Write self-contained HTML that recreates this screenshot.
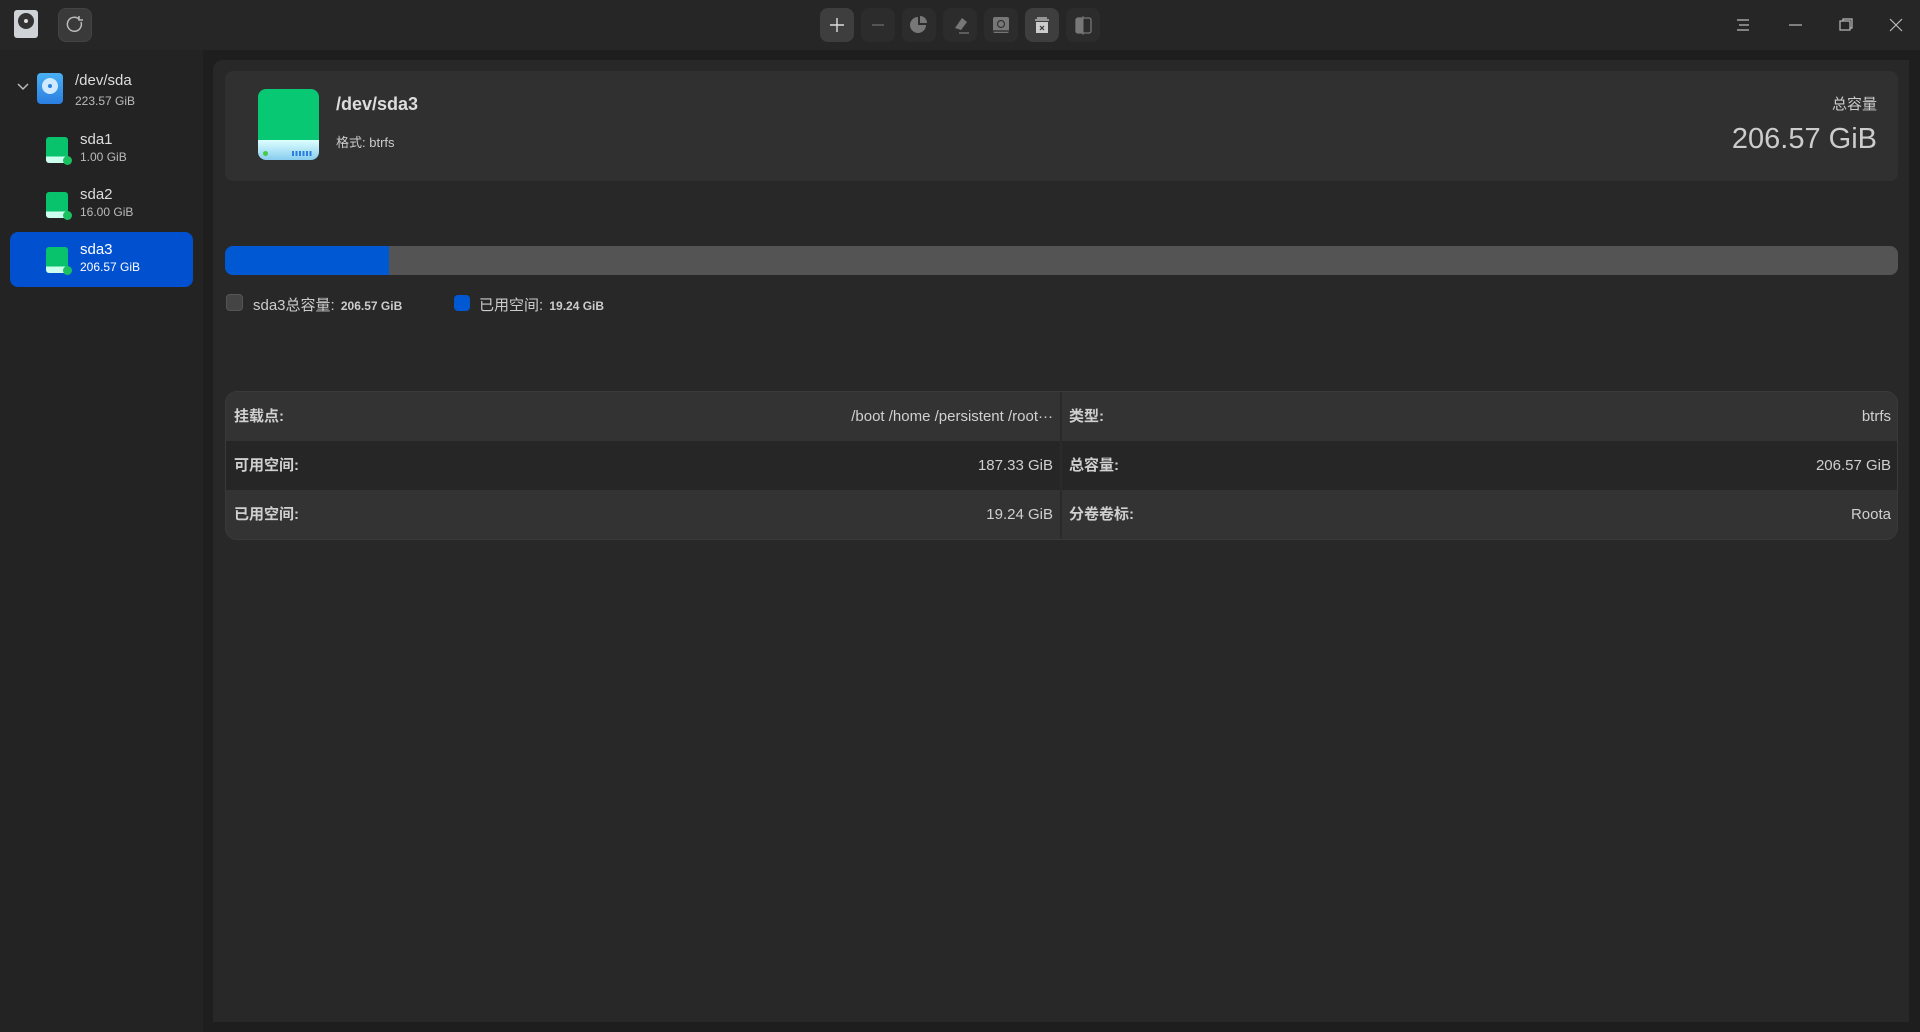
<!DOCTYPE html>
<html><head><meta charset="utf-8"><style>
*{margin:0;padding:0;box-sizing:border-box}
body{width:1920px;height:1032px;background:#1e1e1e;font-family:"Liberation Sans","Noto Sans CJK SC",sans-serif;color:#d0d0d0;position:relative;overflow:hidden}
.a{position:absolute}
.tb{left:0;top:0;width:1920px;height:50px;background:#262626}
.side{left:0;top:50px;width:203px;height:982px;background:#232323}
.main{left:213px;top:60px;width:1696px;height:962px;background:#282828;border-radius:10px 0 0 0}
.btn{width:34px;height:34px;border-radius:8px;background:#2c2c2c;top:8px}
.card{left:225px;top:71px;width:1673px;height:110px;background:#303030;border-radius:8px}
.disk{width:22px;height:26px}
.row{position:absolute;left:0;width:1673px;height:49px;font-size:15px}
.row span{position:absolute;top:0;line-height:49px;height:49px}
</style></head><body>
<div class="a tb"></div>
<div class="a side"></div>
<div class="a main"></div>
<div class="a" style="left:14px;top:10px;width:24px;height:28px;background:#cfd3d8;border-radius:3px"><div class="a" style="left:4px;top:3px;width:16px;height:16px;border-radius:50%;background:#333"></div><div class="a" style="left:10px;top:9px;width:4px;height:4px;border-radius:50%;background:#ddd"></div></div>
<div class="a" style="left:58px;top:8px;width:34px;height:34px;border-radius:8px;background:#3a3a3a;border:1px solid #444"><svg width="32" height="32" viewBox="0 0 32 32"><path d="M22 13a7 7 0 1 1-2-3" fill="none" stroke="#bbb" stroke-width="1.5"/><path d="M20 7v4h4" fill="none" stroke="#bbb" stroke-width="1.5"/></svg></div>
<div class="a btn" style="left:820px;background:#3e3e3e"><svg width="34" height="34"><path d="M17 10v14M10 17h14" stroke="#ddd" stroke-width="1.4"/></svg></div>
<div class="a btn" style="left:861px"><svg width="34" height="34"><path d="M11 17h12" stroke="#666" stroke-width="1.4"/></svg></div>
<div class="a btn" style="left:902px"><svg width="34" height="34"><path d="M16 9a8 8 0 1 0 8 8h-8z" fill="#777"/><path d="M18 8v7h7a7 7 0 0 0-7-7z" fill="#777"/></svg></div>
<div class="a btn" style="left:943px"><svg width="34" height="34"><path d="M12 20l7-10 5 4-6 8z" fill="#777"/><path d="M16 25h10" stroke="#777" stroke-width="1.3"/></svg></div>
<div class="a btn" style="left:984px"><svg width="34" height="34"><rect x="9" y="9" width="16" height="16" rx="2" fill="#777"/><path d="M9 23h16" stroke="#333" stroke-width="1.5"/><circle cx="17" cy="16" r="3.5" fill="none" stroke="#333" stroke-width="1.2"/></svg></div>
<div class="a btn" style="left:1025px;background:#3e3e3e"><svg width="34" height="34"><path d="M12 10h10M10 12h14" stroke="#ccc" stroke-width="1.3"/><rect x="11" y="14" width="12" height="11" fill="#ccc"/><path d="M15 18l4 4M19 18l-4 4" stroke="#333" stroke-width="1.2"/></svg></div>
<div class="a btn" style="left:1066px"><svg width="34" height="34"><rect x="10" y="10" width="15" height="15" rx="2" fill="none" stroke="#777" stroke-width="1.3"/><rect x="10" y="10" width="7" height="15" fill="#777"/><path d="M17 8v19" stroke="#777"/></svg></div>
<svg class="a" style="left:1735px;top:18px" width="16" height="14"><path d="M2 2h12M4 7h10M2 12h12" stroke="#bbb" stroke-width="1.2"/></svg>
<svg class="a" style="left:1787px;top:18px" width="16" height="14"><path d="M2 7h13" stroke="#bbb" stroke-width="1.2"/></svg>
<svg class="a" style="left:1838px;top:17px" width="16" height="16"><rect x="2" y="4" width="10" height="9" fill="none" stroke="#bbb" stroke-width="1.2"/><path d="M5 4V2h9v9h-2" fill="none" stroke="#bbb" stroke-width="1.2"/></svg>
<svg class="a" style="left:1888px;top:17px" width="16" height="16"><path d="M2 2l12 12M14 2L2 14" stroke="#bbb" stroke-width="1.2"/></svg>
<svg class="a" style="left:16px;top:82px" width="14" height="10"><path d="M2 2l5 5 5-5" fill="none" stroke="#bbb" stroke-width="1.5"/></svg>
<div class="a" style="left:37px;top:73px;width:26px;height:31px;border-radius:4px;background:linear-gradient(#4ab0f5,#2a7ee0)"><div class="a" style="left:5px;top:5px;width:16px;height:16px;border-radius:50%;background:#cfeaff"></div><div class="a" style="left:11px;top:11px;width:4px;height:4px;border-radius:50%;background:#2a7ee0"></div></div>
<div class="a" style="left:75px;top:72px;font-size:15px;color:#ddd">/dev/sda</div>
<div class="a" style="left:75px;top:94px;font-size:12px;color:#bbb">223.57 GiB</div>
<div class="a" style="left:10px;top:232px;width:183px;height:55px;border-radius:8px;background:#0050d0"></div>
<div class="a disk" style="left:46px;top:137px;background:linear-gradient(#08c36c 75%,#cfe 75%);border-radius:3px"></div><div class="a" style="left:63px;top:156px;width:9px;height:9px;border-radius:50%;background:#1bc060"></div>
<div class="a" style="left:80px;top:131px;font-size:15px;color:#ddd">sda1</div><div class="a" style="left:80px;top:150px;font-size:12px;color:#bbb">1.00 GiB</div>
<div class="a disk" style="left:46px;top:192px;background:linear-gradient(#08c36c 75%,#cfe 75%);border-radius:3px"></div><div class="a" style="left:63px;top:211px;width:9px;height:9px;border-radius:50%;background:#1bc060"></div>
<div class="a" style="left:80px;top:186px;font-size:15px;color:#ddd">sda2</div><div class="a" style="left:80px;top:205px;font-size:12px;color:#bbb">16.00 GiB</div>
<div class="a disk" style="left:46px;top:247px;background:linear-gradient(#08c36c 75%,#cfe 75%);border-radius:3px"></div><div class="a" style="left:63px;top:266px;width:9px;height:9px;border-radius:50%;background:#1bc060"></div>
<div class="a" style="left:80px;top:241px;font-size:15px;color:#fff">sda3</div><div class="a" style="left:80px;top:260px;font-size:12px;color:#fff">206.57 GiB</div>
<div class="a card"></div>
<div class="a" style="left:258px;top:89px;width:61px;height:71px;border-radius:8px;background:linear-gradient(#08c873 72%,#dff 72%,#8ce 100%)"></div>
<div class="a" style="left:263px;top:151px;width:5px;height:5px;border-radius:50%;background:#4c4"></div>
<div class="a" style="left:292px;top:151px;width:20px;height:5px;background:repeating-linear-gradient(90deg,#2a7ee0 0 2px,transparent 2px 3.5px)"></div>
<div class="a" style="left:336px;top:94px;font-size:18px;font-weight:bold;color:#ddd">/dev/sda3</div>
<div class="a" style="left:336px;top:132px;font-size:13px;color:#ccc">格式: btrfs</div>
<div class="a" style="right:43px;top:93px;font-size:15px;color:#ccc">总容量</div>
<div class="a" style="right:43px;top:123px;font-size:29px;color:#ccc">206.57 GiB</div>
<div class="a" style="left:225px;top:246px;width:1673px;height:29px;border-radius:8px;background:#545454;overflow:hidden"><div style="width:164px;height:29px;background:#0059d2"></div></div>
<div class="a" style="left:226px;top:294px;width:17px;height:17px;border-radius:4px;background:#444;border:1px solid #555"></div>
<div class="a" style="left:253px;top:294px;font-size:15px;color:#ccc">sda3总容量: <span style="font-size:12px;font-weight:bold;margin-left:2px">206.57 GiB</span></div>
<div class="a" style="left:454px;top:295px;width:16px;height:16px;border-radius:4px;background:#0059d2"></div>
<div class="a" style="left:479px;top:294px;font-size:15px;color:#ccc">已用空间: <span style="font-size:12px;font-weight:bold;margin-left:2px">19.24 GiB</span></div>
<div class="a" style="left:225px;top:391px;width:1673px;height:149px;border-radius:12px;overflow:hidden;border:1px solid #3a3a3a;background:#333">
<div class="row" style="top:0;background:#333"><span style="left:8px;font-weight:bold">挂载点:</span><span style="right:846px">/boot /home /persistent /root···</span><span style="left:843px;font-weight:bold">类型:</span><span style="right:8px">btrfs</span></div>
<div class="row" style="top:49px;background:#262626"><span style="left:8px;font-weight:bold">可用空间:</span><span style="right:846px">187.33 GiB</span><span style="left:843px;font-weight:bold">总容量:</span><span style="right:8px">206.57 GiB</span></div>
<div class="row" style="top:98px;background:#333"><span style="left:8px;font-weight:bold">已用空间:</span><span style="right:846px">19.24 GiB</span><span style="left:843px;font-weight:bold">分卷卷标:</span><span style="right:8px">Roota</span></div>
<div class="a" style="left:834px;top:0;width:2px;height:149px;background:#2a2a2a"></div>
</div>
</body></html>
